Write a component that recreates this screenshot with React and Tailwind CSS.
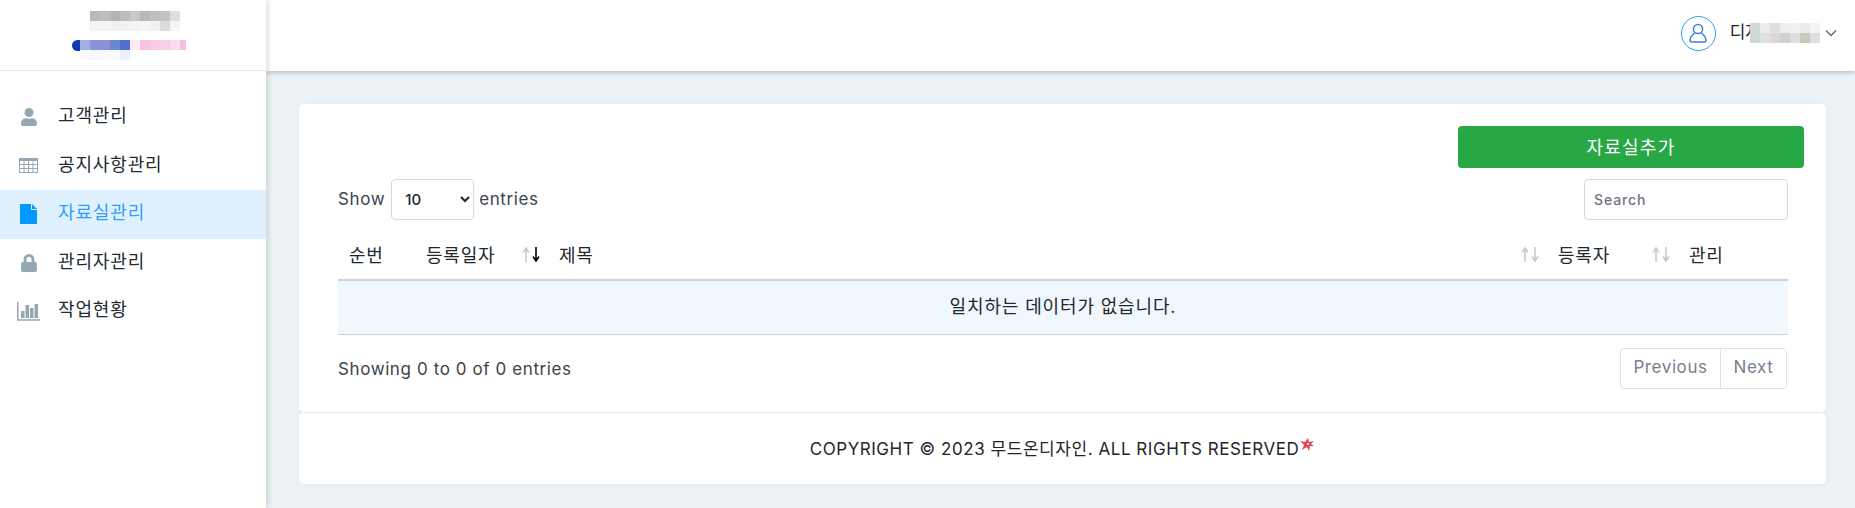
import { FaUser, FaLock } from "react-icons/fa";

const logoTop = ["bg-[#b8b8b8]", "bg-[#bdbdbd]", "bg-[#b4b4b4]", "bg-[#bcbcbc]", "bg-[#c8c8c8]", "bg-[#b8b8b8]", "bg-[#bfbfbf]", "bg-[#c2c2c2]", "bg-[#dedede]"];
const logoSub = ["bg-[#f3f3f3]", "bg-[#f3f3f3]", "bg-[#f2f2f2]", "bg-[#f2f2f2]", "bg-[#f3f3f3]", "bg-[#f5f5f5]", "bg-[#f2f2f2]", "bg-[#dadada]", "bg-[#f5f5f5]"];
const logoBlue = ["bg-[#a0aee2]", "bg-[#8a92d8]", "bg-[#8a92d8]", "bg-[#6d85d8]", "bg-[#5070d0]", "bg-[#fde8f3]", "bg-[#f6c4e2]", "bg-[#f8cce6]", "bg-[#f9cfe6]", "bg-[#fbdcee]"];
const logoBlueSub = ["bg-[#fafafe]", "bg-[#f7f8fd]", "bg-[#fafafe]", "bg-[#f8f9fd]", "bg-[#eef1fa]"];
const nameTop = ["bg-[#d0d8d6]", "bg-[#ececec]", "bg-[#e4dcdf]", "bg-[#eeeeee]", "bg-[#f0f0ee]", "bg-[#e8ecea]", "bg-[#f3f4f5]"];
const nameBottom = ["bg-[#d0d8d6]", "bg-[#dce2de]", "bg-[#dcd8da]", "bg-[#cdd4d0]", "bg-[#dcdee0]", "bg-[#c8c8bc]", "bg-[#dce0e2]"];

const Cells = ({ cells }) => (
  <div className="flex">
    {cells.map((c, i) => (
      <div key={i} className={`w-[10px] h-[10px] ${c}`} />
    ))}
  </div>
);

const ChartIcon = () => (
  <svg width="23" height="19" viewBox="0 0 23 19" className="text-[#94a8b4]">
    <path d="M.75 0v18h22.250" fill="none" stroke="currentColor" strokeWidth="1.5" />
    <rect x="4" y="9" width="3.500" height="7" fill="currentColor" />
    <rect x="8.500" y="3" width="3.500" height="13" fill="currentColor" />
    <rect x="13" y="6" width="3.500" height="10" fill="currentColor" />
    <rect x="17.500" y="2" width="3.500" height="14" fill="currentColor" />
  </svg>
);

const TableIcon = () => (
  <svg width="19" height="15" viewBox="0 0 19 15" className="text-[#94a8b4]">
    <path
      fillRule="evenodd"
      fill="currentColor"
      d="M0 0h19v15H0zM1 3v3h3.500V3zM5.500 3v3h3.500V3zM10 3v3h3.500V3zM14.500 3v3H18V3zM1 7v3h3.500V7zM5.500 7v3h3.500V7zM10 7v3h3.500V7zM14.500 7v3H18V7zM1 11v3h3.500v-3zM5.500 11v3h3.500v-3zM10 11v3h3.500v-3zM14.500 11v3H18v-3z"
    />
  </svg>
);

const FileIcon = () => (
  <svg width="17" height="20" viewBox="0 0 17 20" className="text-[#0099ff]">
    <path fill="currentColor" d="M0 0h11v6h6v14H0zM12 0l5 5h-5z" />
  </svg>
);

const menus = [
  { label: "고객관리", icon: <FaUser className="text-[18px] text-[#94a8b4]" /> },
  { label: "공지사항관리", icon: <TableIcon /> },
  { label: "자료실관리", icon: <FileIcon />, active: true },
  { label: "관리자관리", icon: <FaLock className="text-[18px] text-[#94a8b4]" /> },
  { label: "작업현황", icon: <ChartIcon /> },
];

const Arrow = ({ down, dark }) => (
  <svg width="8" height="15" viewBox="0 0 8 15" className={dark ? "text-black" : "text-[#c4cbcf]"}>
    {down ? (
      <path d="M4 0v13M1 9.500 4 14l3-4.500" fill="none" stroke="currentColor" strokeWidth="1.6" />
    ) : (
      <path d="M4 15V2M1 5.500 4 1l3 4.500" fill="none" stroke="currentColor" strokeWidth="1.6" />
    )}
  </svg>
);

const Sort = ({ active }) => (
  <span className="absolute right-[8px] top-[27px] flex">
    <Arrow />
    <span className="ml-[2px]">
      <Arrow down dark={active} />
    </span>
  </span>
);

const Sidebar = () => (
  <aside className="w-[266px] shrink-0 bg-white shadow-[2px_0_6px_rgba(0,0,0,0.14)] z-20">
    <div className="h-[71px] border-b border-[#e4e6e8] flex flex-col items-start pt-[11px]">
      <div className="ml-[90px]">
        <Cells cells={logoTop} />
        <Cells cells={logoSub} />
      </div>
      <div className="ml-[72px] mt-[9px] flex">
        <div className="w-[8px] h-[11px] rounded-l-full bg-[#1237b4]" />
        <div>
          <Cells cells={logoBlue} />
          <Cells cells={logoBlueSub} />
        </div>
        <div className="w-[6px] h-[10px] bg-[#f6bfe0]" />
      </div>
    </div>
    <nav className="pt-[22px]">
      {menus.map((m) => (
        <div
          key={m.label}
          className={`h-[48.5px] flex items-center ${m.active ? "bg-[#dff1ff] text-[#2f9dff]" : "text-[#222b33]"}`}
        >
          <div className="w-[58px] shrink-0 flex justify-center pr-[1px]">{m.icon}</div>
          <span className="pb-[3px] text-[18px] tracking-[0.85px]">{m.label}</span>
        </div>
      ))}
    </nav>
  </aside>
);

const Header = () => (
  <header className="h-[71px] shrink-0 bg-white shadow-[0_2px_4px_rgba(0,0,0,0.2)] z-10 flex items-center justify-end pr-[16px] pb-[5px]">
    <div className="w-[35px] h-[35px] rounded-full border border-[#2a9fe8] flex items-center justify-center mr-[14px]">
      <svg width="18" height="20" viewBox="0 0 18 20" fill="none" stroke="#3f80dc" strokeWidth="1.5">
        <circle cx="9" cy="6" r="4.6" />
        <path d="M5.500 10 3 12.500C1.500 14 1 15.500 1 17c0 1.200.8 2 2 2h12c1.200 0 2-.8 2-2 0-1.500-.5-3-2-4.500L12.500 10" />
      </svg>
    </div>
    <span className="whitespace-nowrap text-[17px] text-[#141c36]">디자</span>
    {/* blurred name lies over the end of the text */}
    <div className="relative -ml-[11px] mr-[5px]">
      <Cells cells={nameTop} />
      <Cells cells={nameBottom} />
    </div>
    <svg width="12" height="8" viewBox="0 0 12 8" fill="none" stroke="#5a6a80" strokeWidth="1.3" className="mr-[2px]">
      <path d="M1 1.500 6 6.500 11 1.500" />
    </svg>
  </header>
);

const Th = ({ w, children, sort, active }) => (
  <th className={`relative ${w} pl-[11px] pt-[12px] text-left font-normal`}>
    {children}
    {sort && <Sort active={active} />}
  </th>
);

const Content = () => (
  <div className="bg-white rounded-[5px] shadow-[0_0_8px_rgba(0,0,0,0.04)] h-[308px] pt-[22px] pl-[39px] pr-[22px]">
    <div className="flex justify-end">
      <button className="w-[346px] h-[42px] rounded-[4px] bg-[#28a745] text-white text-[18px] tracking-[1.2px]">자료실추가</button>
    </div>
    <div className="mt-[11px] mr-[16px] flex items-center justify-between text-[17px] tracking-[0.6px] text-[#3b444d]">
      <label className="flex items-center">
        Show
        <select className="ml-[6px] mr-[5px] w-[83px] h-[41px] pl-[9px] rounded-[4px] border border-[#d6d8dc] bg-white text-[15px] font-medium tracking-normal text-[#20282f] outline-none">
          <option>10</option>
        </select>
        entries
      </label>
      <input
        placeholder="Search"
        className="w-[204px] h-[41px] px-[9px] rounded-[4px] border border-[#d6d8dc] text-[14px] font-medium tracking-[0.9px] outline-none placeholder:text-[#70757d]"
      />
    </div>
    <table className="mr-[16px] w-[1450px] table-fixed border-collapse">
      <thead>
        <tr className="h-[60px] border-b-2 border-[#cfd1d3] text-[18px] tracking-[0.8px] text-[#20282f]">
          <Th w="w-[77px]">순번</Th>
          <Th w="w-[133px]" sort active>등록일자</Th>
          <Th w="w-[999px]" sort>제목</Th>
          <Th w="w-[131px]" sort>등록자</Th>
          <Th w="w-[110px]">관리</Th>
        </tr>
      </thead>
      <tbody>
        <tr className="h-[54px] bg-[#f0f7fd] border-b border-[#cfd1d6]">
          <td colSpan={5} className="pb-[2px] text-center text-[18px] tracking-[0.85px] text-[#20282f]">일치하는 데이터가 없습니다.</td>
        </tr>
      </tbody>
    </table>
    <div className="mt-[13px] mr-[16px] flex items-center justify-between text-[17px] tracking-[0.6px] text-[#3b444d]">
      <span className="pt-[3px]">Showing 0 to 0 of 0 entries</span>
      <div className="flex h-[41px] mr-[1px] rounded-[4px] border border-[#dee2e6] text-[#78808e]">
        <span className="w-[100px] flex items-center justify-center border-r border-[#dee2e6]">Previous</span>
        <span className="w-[65px] flex items-center justify-center">Next</span>
      </div>
    </div>
  </div>
);

const Footer = () => (
  <footer className="mt-[1px] h-[71px] pt-[2px] bg-white rounded-[5px] shadow-[0_1px_6px_rgba(0,0,0,0.05)] flex items-center justify-center text-[17px] tracking-[0.55px] text-[#1e262e]">
    <span>COPYRIGHT © 2023 무드온디자인. ALL RIGHTS RESERVED</span>
    <svg width="16" height="14" viewBox="0 0 16 14" className="-mt-[10px]">
      <path fill="#dc4a60" d="M1 3l5 1 3-4 1 4 5-1-3 3 3 2-4 0-1 5-2-4-5 3 2-5z" />
      <path fill="#f7e3a8" d="M8 5h2v2H8z" />
    </svg>
  </footer>
);

export default function App() {
  return (
    <div className="w-[1855px] h-[508px] overflow-hidden flex bg-[#edf2f6] font-['Inter','Noto_Sans_CJK_KR',sans-serif]">
      <Sidebar />
      <div className="flex-1 flex flex-col min-w-0">
        <Header />
        <main className="pt-[33px] pl-[33px] pr-[29px]">
          <Content />
          <Footer />
        </main>
      </div>
    </div>
  );
}
